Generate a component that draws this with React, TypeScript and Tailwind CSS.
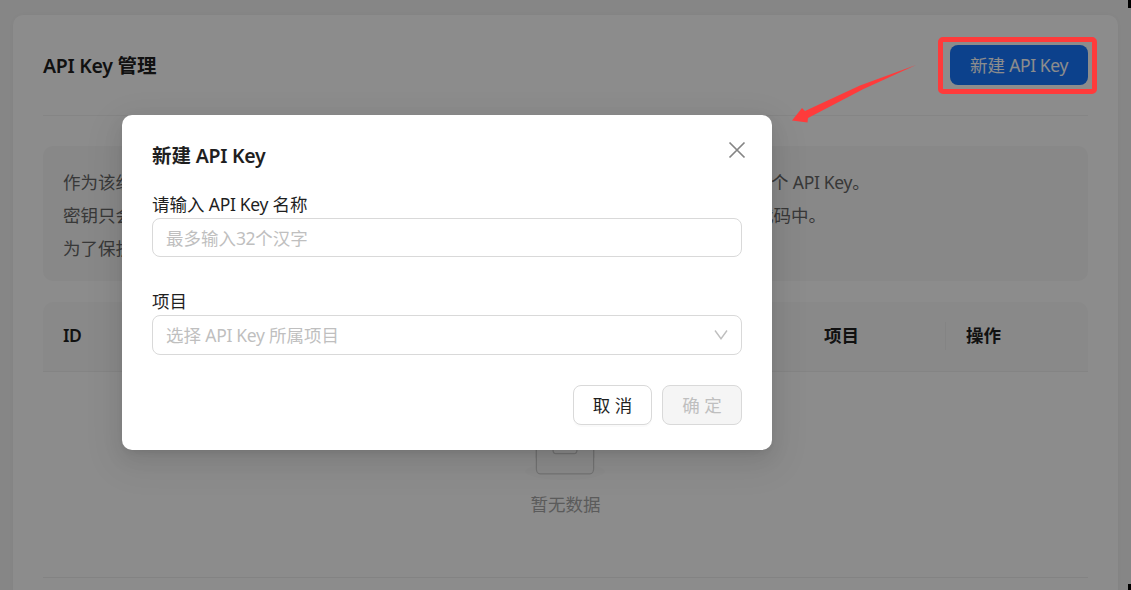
import type { ReactNode } from "react";

function En({ children, className = "" }: { children: ReactNode; className?: string }) {
  return <span className={className}>{children}</span>;
}

function EmptyIcon() {
  return (
    <svg className="mr-[2px] h-[51px] w-20 shrink-0" viewBox="0 0 64 41">
      <g transform="translate(0 1)" fill="none" fillRule="evenodd">
        <ellipse fill="#fcfcfc" cx="32" cy="33" rx="32" ry="7" />
        <g fillRule="nonzero" stroke="#cfcfcf">
          <path d="M55 12.76L44.854 1.258C44.367.474 43.656 0 42.907 0H21.093c-.749 0-1.46.474-1.947 1.257L9 12.761V22h46v-9.24z" />
          <path
            d="M41.613 15.931c0-1.605.994-2.93 2.227-2.931H55v18.137C55 33.26 53.68 35 52.05 35h-40.1C10.32 35 9 33.259 9 31.137V13h11.16c1.233 0 2.227 1.323 2.227 2.928v.022c0 1.605 1.005 2.901 2.237 2.901h14.752c1.232 0 2.237-1.308 2.237-2.913v-.007z"
            fill="#fcfcfc"
          />
        </g>
      </g>
    </svg>
  );
}

function Page() {
  return (
    <main className="h-full pl-[13px] pr-[13px] pt-[15px]">
      <section className="h-[640px] rounded-[10px] bg-white px-[30px] pt-[30px] shadow-[0_0_6px_rgba(0,0,0,0.04)]">
        <header className="flex h-[71px] items-start justify-between border-b border-[#f2f2f2]">
          <h1 className="text-[19.5px] font-semibold leading-[42px] text-[#1f1f1f]">
            <En className="tracking-[-0.3px]">API Key </En>管理
          </h1>
          <button className="h-10 w-[138px] rounded-lg bg-[#1677ff] text-[17.5px] leading-10 text-white">
            新建<En className="tracking-[-0.4px]"> API Key</En>
          </button>
        </header>

        <div className="mt-[30px] flex h-[135px] rounded-[10px] bg-[#f7f7f7] pl-5 pt-5 text-[17.5px] leading-[33px] text-[#666]">
          <div className="w-[708px]">
            <p>作为该组</p>
            <p>密钥只会</p>
            <p>为了保护</p>
          </div>
          <div>
            <p>个<En className="tracking-[-0.3px]"> API Key</En>。</p>
            <p className="-ml-[15px]">代码中。</p>
          </div>
        </div>

        <div className="mt-[21px] flex h-[70px] items-center rounded-t-[10px] border-b border-[#f0f0f0] bg-[#fafafa] pb-[2px] text-[17.5px] font-bold text-[#1f1f1f]">
          <div className="w-[761px] pl-5 font-semibold tracking-[-0.4px]">ID</div>
          <div className="flex h-7 w-[142px] items-center border-r border-[#f0f0f0] pl-5">项目</div>
          <div className="pl-5">操作</div>
        </div>

        <div className="flex h-[206px] flex-col items-center border-b border-[#efefef] pt-[57px] text-[17.5px] text-[#a6a6a6]">
          <EmptyIcon />
          <p className="mt-[10px] leading-[28px]">暂无数据</p>
        </div>
      </section>
    </main>
  );
}

function Dialog() {
  return (
    <div
      role="dialog"
      className="absolute left-[122px] top-[115px] flex h-[335px] w-[650px] flex-col rounded-[10px] bg-white px-[30px] pt-[25px] text-[17.5px] text-[#1f1f1f] shadow-[0_8px_20px_0_rgba(0,0,0,0.08),0_4px_8px_-5px_rgba(0,0,0,0.12),0_11px_35px_10px_rgba(0,0,0,0.05)]"
    >
      <div className="flex h-[50px] items-start justify-between">
        <h2 className="text-[19.5px] font-semibold leading-8">
          新建<En className="tracking-[-0.3px]"> API Key</En>
        </h2>
        <svg className="-mr-[4px] mt-[1px] size-[18px]" viewBox="0 0 18 18" fill="none" stroke="#858585" strokeWidth="1.7">
          <path d="M1.5 1.5L16.5 16.5M16.5 1.5L1.5 16.5" />
        </svg>
      </div>
      <label className="h-7 leading-7">
        请输入<En className="tracking-[-0.3px]"> API Key </En>名称
      </label>
      <div className="h-[39px] shrink-0 rounded-lg border border-[#d9d9d9] pl-[13px] leading-[38px] text-[#bfbfbf]">
        最多输入<En className="tracking-[-0.4px]">32</En>个汉字
      </div>
      <label className="mt-[30px] h-7 leading-7">项目</label>
      <div className="flex h-10 shrink-0 items-center justify-between rounded-lg border border-[#d9d9d9] pl-[13px] pr-[13px] text-[#bfbfbf]">
        <span>
          选择<En className="tracking-[-0.3px]"> API Key </En>所属项目
        </span>
        <svg className="h-[11px] w-[14px]" viewBox="0 0 14 11" fill="none" stroke="#bfbfbf" strokeWidth="1.4">
          <path d="M1 0.5L7 8.7L13 0.5" />
        </svg>
      </div>
      <div className="mt-[30px] flex justify-end gap-[10px]">
        <button className="h-10 w-[79px] rounded-lg border border-[#d9d9d9] bg-white shadow-[0_2px_0_rgba(0,0,0,0.02)]">
          取 消
        </button>
        <button className="h-10 w-20 rounded-lg border border-[#d9d9d9] bg-[#f5f5f5] text-[#bfbfbf]">确 定</button>
      </div>
    </div>
  );
}

export default function App() {
  return (
    <div className="relative h-[590px] w-[1131px] overflow-hidden bg-[#f5f5f5] font-['Noto_Sans','Noto_Sans_CJK_SC',sans-serif]">
      <Page />
      <div className="absolute inset-0 bg-black/45" />
      <Dialog />
      <div className="absolute left-[938px] top-[37px] h-[57px] w-[159px] rounded-[5px] border-[5px] border-[#fe3b3b]" />
      <svg className="absolute left-[790px] top-[60px] h-[66px] w-[130px]" viewBox="0 0 130 66" fill="#fe3b3b">
        <path d="M126 5L70 25.5L15 51L12 48L2 60.5L17.5 62.5L18 58L73 29.3Z" />
      </svg>
      <div className="absolute right-0 top-0 h-2 w-[3px] bg-black" />
      <div className="absolute bottom-0 right-0 h-[6px] w-[3px] bg-black" />
    </div>
  );
}
